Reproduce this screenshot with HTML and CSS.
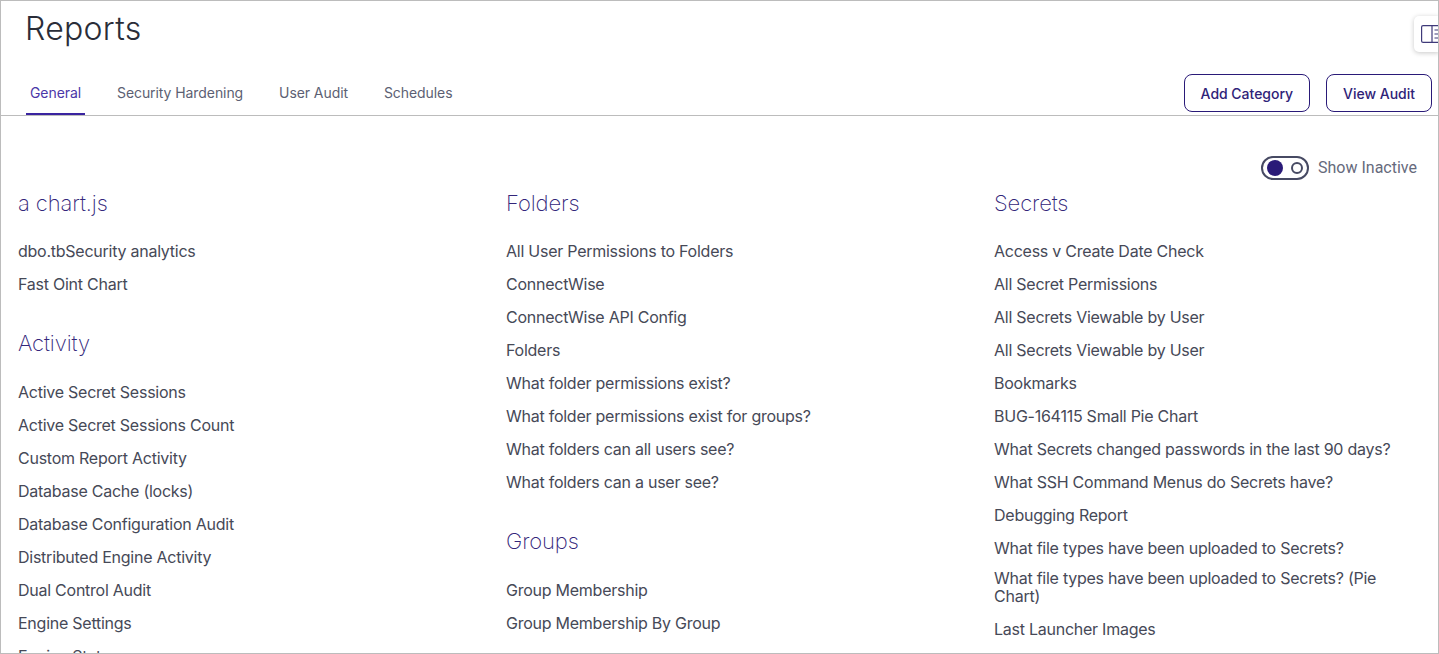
FILE: index.html
```html
<!DOCTYPE html>
<html lang="en">
<head>
<meta charset="utf-8">
<title>Reports</title>
<link rel="stylesheet" href="styles.css">
</head>
<body>
<div class="frame">
  <header class="header">
    <h1 class="title">Reports</h1>
    <div class="tabbar">
      <nav class="tabs">
        <a class="tab active">General</a>
        <a class="tab">Security Hardening</a>
        <a class="tab">User Audit</a>
        <a class="tab">Schedules</a>
      </nav>
      <div class="actions">
        <button class="btn">Add Category</button>
        <button class="btn">View Audit</button>
      </div>
    </div>
    <div class="panel-toggle">
      <svg width="24" height="18" viewBox="0 0 24 18" fill="none" stroke="#3f3a7a" stroke-width="1.2">
        <rect x="0.6" y="0.6" width="22" height="16.8" rx="1.5"/>
        <path d="M11 0.6V17.4M13.5 5H24M13.5 9H24M13.5 13H24"/>
      </svg>
    </div>
  </header>
  <main class="content">
    <div class="toggle-row">
      <span class="switch"><span class="knob"></span><span class="off-dot"></span></span>
      <span class="toggle-label">Show Inactive</span>
    </div>
    <div class="columns">
      <section class="col">
        <h2 class="cat">a chart.js</h2>
        <ul class="list">
          <li>dbo.tbSecurity analytics</li>
          <li>Fast Oint Chart</li>
        </ul>
        <h2 class="cat">Activity</h2>
        <ul class="list">
          <li>Active Secret Sessions</li>
          <li>Active Secret Sessions Count</li>
          <li>Custom Report Activity</li>
          <li>Database Cache (locks)</li>
          <li>Database Configuration Audit</li>
          <li>Distributed Engine Activity</li>
          <li>Dual Control Audit</li>
          <li>Engine Settings</li>
          <li>Engine Status</li>
        </ul>
      </section>
      <section class="col">
        <h2 class="cat">Folders</h2>
        <ul class="list">
          <li>All User Permissions to Folders</li>
          <li>ConnectWise</li>
          <li>ConnectWise API Config</li>
          <li>Folders</li>
          <li>What folder permissions exist?</li>
          <li>What folder permissions exist for groups?</li>
          <li>What folders can all users see?</li>
          <li>What folders can a user see?</li>
        </ul>
        <h2 class="cat">Groups</h2>
        <ul class="list">
          <li>Group Membership</li>
          <li>Group Membership By Group</li>
        </ul>
      </section>
      <section class="col">
        <h2 class="cat">Secrets</h2>
        <ul class="list">
          <li>Access v Create Date Check</li>
          <li>All Secret Permissions</li>
          <li>All Secrets Viewable by User</li>
          <li>All Secrets Viewable by User</li>
          <li>Bookmarks</li>
          <li>BUG-164115 Small Pie Chart</li>
          <li>What Secrets changed passwords in the last 90 days?</li>
          <li>What SSH Command Menus do Secrets have?</li>
          <li>Debugging Report</li>
          <li>What file types have been uploaded to Secrets?</li>
          <li class="wrapped">What file types have been uploaded to Secrets? (Pie Chart)</li>
          <li>Last Launcher Images</li>
        </ul>
      </section>
    </div>
  </main>
</div>
</body>
</html>
```
FILE: styles.css
```css
* { box-sizing: border-box; }
html, body { margin: 0; height: 100%; overflow: hidden; background: #fff; }
body { font-family: Inter, "Noto Sans", sans-serif; }
.frame {
  position: relative;
  height: 654px;
  border: 1px solid #bcbcbc;
  overflow: hidden;
}
.header {
  position: relative;
  height: 115px;
  border-bottom: 1px solid #bcbcbc;
  padding-left: 25px;
}
.title {
  margin: 0 0 0 -1px;
  padding-top: 8px;
  height: 70px;
  font-size: 32px;
  line-height: 40px;
  font-weight: 300;
  letter-spacing: 0.3px;
  color: #2a2d38;
}
.tabbar {
  display: flex;
  justify-content: space-between;
  align-items: flex-start;
  padding-right: 6px;
}
.tabs { display: flex; gap: 28px; }
.tab {
  height: 44px;
  padding: 13px 4px 0;
  font-size: 14px;
  line-height: 17px;
  letter-spacing: -0.08px;
  color: #5c5f73;
  margin-bottom: -1px;
}
.tab.active {
  color: #4b37a8;
  border-bottom: 2px solid #3a24a0;
}
.actions { display: flex; gap: 16px; margin-top: 3px; }
.btn {
  height: 38px;
  padding: 0 16px;
  background: #fff;
  border: 1px solid #2a1a78;
  border-radius: 8px;
  font-family: inherit;
  font-size: 14px;
  font-weight: 500;
  letter-spacing: -0.02px;
  color: #2f2378;
}
.panel-toggle {
  position: absolute;
  top: 15px;
  right: -1px;
  width: 25px;
  height: 36px;
  padding: 9px 0 0 7px;
  overflow: hidden;
  background: #fff;
  border-radius: 5px 0 0 5px;
  box-shadow: 0 1px 5px rgba(0,0,0,.22);
}
.panel-toggle svg { display: block; }
.content { padding: 0 0 0 17px; }
.toggle-row {
  display: flex;
  justify-content: flex-end;
  align-items: center;
  gap: 9px;
  height: 24px;
  margin-top: 40px;
  padding-right: 21px;
}
.switch {
  display: flex;
  align-items: center;
  justify-content: space-between;
  width: 48px;
  height: 24px;
  padding: 0 4px;
  border: 2px solid #474a63;
  border-radius: 12px;
}
.knob { width: 16px; height: 16px; border-radius: 50%; background: #2a1a78; }
.off-dot { width: 12px; height: 12px; border-radius: 50%; border: 2px solid #474a63; }
.toggle-label { padding-bottom: 2px; font-family: Roboto, sans-serif; font-size: 16px; color: #666a7c; }
.columns {
  display: grid;
  grid-template-columns: repeat(3, 488px);
  margin-top: 9px;
}
.cat {
  margin: 0;
  font-size: 22px;
  line-height: 28px;
  font-weight: 200;
  letter-spacing: -0.1px;
  color: #33267a;
}
.list {
  list-style: none;
  margin: 18px 0 28px;
  padding: 0;
}
.col > .list:nth-of-type(1) { margin: 17px 0 29px; }
.list li {
  display: flex;
  align-items: center;
  min-height: 33px;
  max-width: 420px;
  padding: 6px 0;
  font-size: 16px;
  line-height: 18px;
  letter-spacing: -0.25px;
  color: #464957;
}
.list li.wrapped { padding: 5px 0 7px; }
```
